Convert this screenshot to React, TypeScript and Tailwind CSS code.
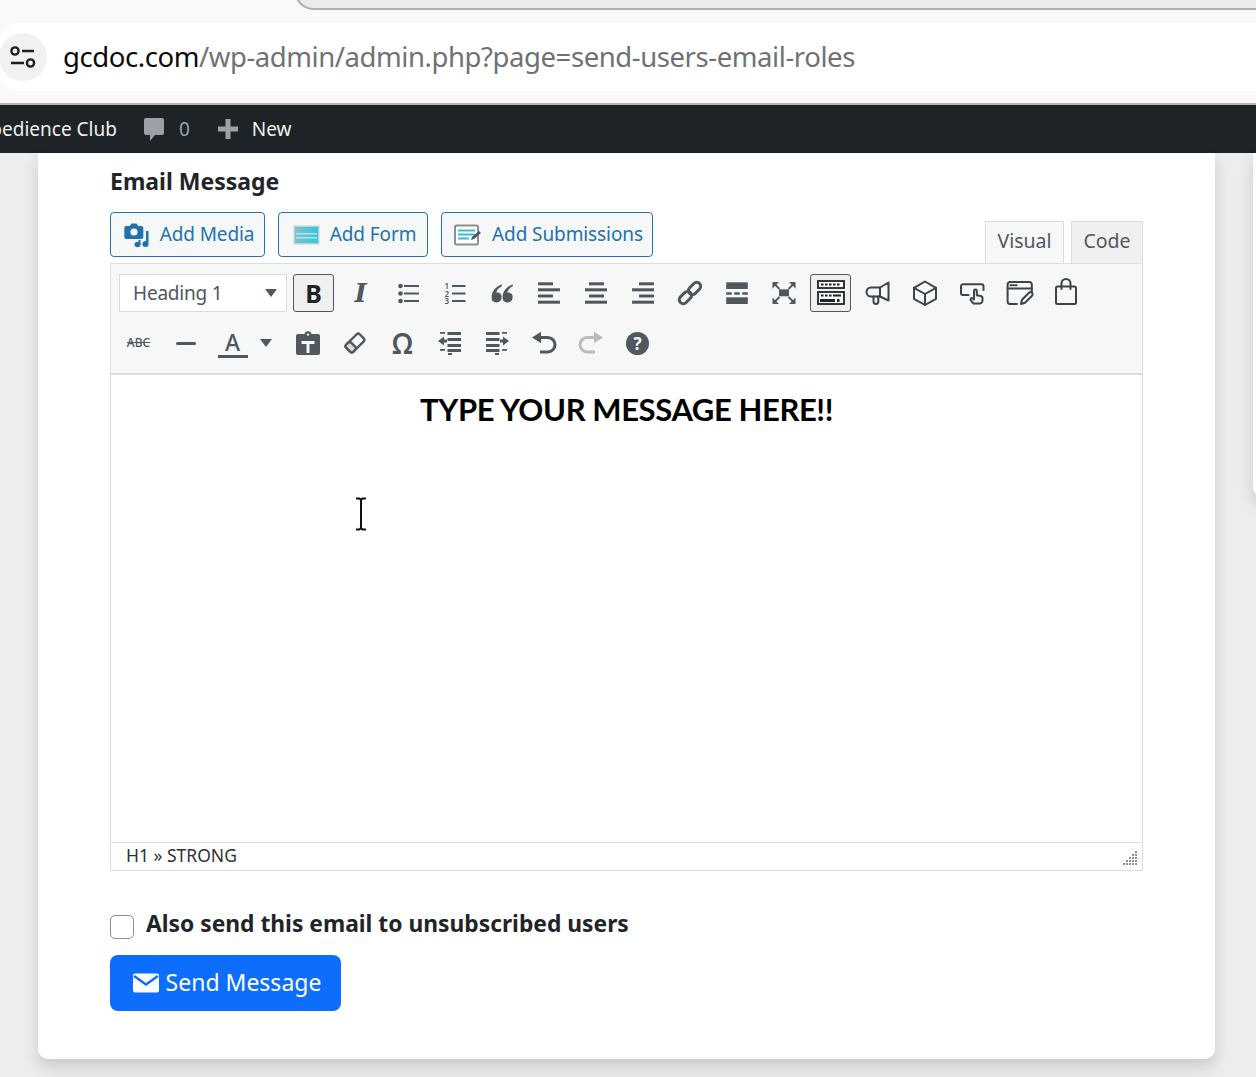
import type { ReactNode } from 'react'

const UI_FONT = "font-['Noto_Sans',sans-serif]"
const GREY = '#50575e'
const DARK = '#3c434a'

const Svg = ({ children, size = 24, view = '0 0 24 24' }: { children: ReactNode; size?: number; view?: string }) => (
  <svg width={size} height={size} viewBox={view} fill={GREY} className="overflow-visible">
    {children}
  </svg>
)

const Line = ({ children }: { children: ReactNode }) => (
  <Svg>
    <g fill="none" stroke={DARK} strokeWidth={2} strokeLinecap="round" strokeLinejoin="round">
      {children}
    </g>
  </Svg>
)

// toolbar button, every cell is 41px wide
const Tool = ({ children, active, nudge }: { children: ReactNode; active?: boolean; nudge?: boolean }) => (
  <div
    className={`flex h-[38px] w-[41px] shrink-0 items-center justify-center rounded-[3px] border ${
      active ? 'border-[#50575e] bg-[#f0f0f1]' : 'border-transparent'
    } ${nudge ? 'ml-px' : ''}`}
  >
    {children}
  </div>
)

const Caret = () => (
  <svg width={12} height={8} viewBox="0 0 12 8" fill={GREY}>
    <path d="M0 0h12L6 8z" />
  </svg>
)

const BulletList = () => (
  <Svg>
    <circle cx="4.5" cy="5" r="2.3" />
    <circle cx="4.5" cy="12.5" r="2.3" />
    <circle cx="4.5" cy="20" r="2.3" />
    <path d="M8 4h15v2H8zM8 11.500h15v2H8zM8 19h15v2H8z" />
  </Svg>
)

const NumberList = () => (
  <Svg>
    <g fontFamily="Noto Sans, sans-serif" fontSize="8" fontWeight="600">
      <text x="1.500" y="8">1</text>
      <text x="1.500" y="15.500">2</text>
      <text x="1.500" y="23">3</text>
    </g>
    <path d="M9 4h13.500v2H9zM9 11.500h13.500v2H9zM9 19h13.500v2H9z" />
  </Svg>
)

const QUOTE = 'M11.800 3.200C6 5.600 1.600 9.800 1.600 16.400a5 5 0 1 0 6.400-4.800c-.6-.2-1.200-.2-1.700-.2.6-2.800 2.800-4.700 5.500-6.100z'

const QuoteMark = () => (
  <Svg>
    <path d={QUOTE} />
    <path transform="translate(11 0)" d={QUOTE} />
  </Svg>
)

const Align = ({ side }: { side: 'left' | 'center' | 'right' }) => {
  const short = side === 'left' ? 1 : side === 'center' ? 5 : 8
  return (
    <Svg>
      <rect x={short} y="1.300" width="15" height="3" />
      <rect x="1" y="7.300" width="22" height="3" />
      <rect x={short} y="13.500" width="15" height="3" />
      <rect x="1" y="19.700" width="22" height="3" />
    </Svg>
  )
}

const ChainLink = () => (
  <Svg>
    <g fill="none" stroke={GREY} strokeWidth={3} transform="rotate(-45 12 12)">
      <rect x="-1.500" y="8" width="14" height="8" rx="4" />
      <rect x="11.500" y="8" width="14" height="8" rx="4" />
    </g>
  </Svg>
)

const ReadMore = () => (
  <Svg>
    <rect x="1.200" y="1.300" width="21.600" height="6.700" />
    <path d="M1.200 11.300h5.600v2.400H1.200zM9.200 11.300h5.600v2.400H9.200zM17.200 11.300h5.600v2.400h-5.600z" />
    <rect x="1.200" y="16.300" width="21.600" height="6.700" />
  </Svg>
)

const Fullscreen = () => (
  <Svg>
    <rect x="7" y="8.300" width="10" height="7" />
    <path d="M0.500 1h6.500L0.500 7.500zM23.500 1H17l6.500 6.500zM0.500 23v-6.500L7 23zM23.500 23v-6.500L17 23z" />
    <path d="M3 3.500l4.500 4.500M21 3.500L16.500 8M3 20.500L7.500 16M21 20.500L16.500 16" stroke={GREY} strokeWidth={1.800} />
  </Svg>
)

const KitchenSink = () => (
  <Svg size={28} view="0 0 28 28">
    <g fill="#f6f7f7" stroke="#1d2327" strokeWidth={1.800}>
      <rect x="1" y="2" width="26" height="7" />
      <rect x="1" y="13" width="26" height="12" />
    </g>
    <g fill="#1d2327">
      <path d="M4 4.500h2.500v2H4zM8 4.500h2.500v2H8zM12 4.500h2.500v2H12zM16 4.500h2.500v2H16zM20 4.500h2.500v2H20z" />
      <path d="M4 15.500h2.500v2H4zM8 15.500h2.500v2H8zM12 15.500h2.500v2H12zM16 15.500h8v2h-8z" />
      <path d="M3 20h15v3H3zM20 20h2.500v3H20z" />
    </g>
  </Svg>
)

const Bullhorn = () => (
  <Line>
    <path d="M22.500 1.500L14 6.500H5a4.500 4.500 0 0 0 0 9h9l8.500 4z" />
    <path d="M14 6.500v9M7.500 15.500v5a2.400 2.400 0 0 0 4.800 0v-5" />
  </Line>
)

const Cube = () => (
  <Line>
    <path d="M12 0.500L23 6.800v11L12 24 1 17.800v-11z" />
    <path d="M1 6.800L12 13 23 6.800M12 13v11" />
  </Line>
)

const HandButton = () => (
  <Line>
    <path d="M8.500 14H3a2 2 0 0 1-2-2V5.300a2 2 0 0 1 2-2h18.500a2 2 0 0 1 2 2V9" />
    <path d="M13.500 22.600l-2.800-3.400a1.400 1.400 0 0 1 2.100-1.800l1.200 1.200V10a1.400 1.400 0 0 1 2.800 0v4.200l3.900.8a2.200 2.200 0 0 1 1.800 2.200v2.200a3 3 0 0 1-3 3.200z" />
  </Line>
)

const EditorWindow = () => (
  <Line>
    <path d="M10 23H3a2.400 2.400 0 0 1-2.400-2.400V3.400A2.400 2.400 0 0 1 3 1h19.400a2.400 2.400 0 0 1 2.400 2.400V11" />
    <path d="M.6 7.500h24.200" />
    <path d="M3.400 4.200h1M6 4.200h1M8.600 4.200h1" />
    <path d="M14 23l1-4.200 7-7a2.100 2.100 0 0 1 3 3l-7 7z" />
  </Line>
)

const Bag = () => (
  <Line>
    <rect x="2" y="5.500" width="20" height="17.500" rx="1.500" />
    <path d="M7.500 8V2.500a4.500 4.500 0 0 1 9 0V8" />
  </Line>
)

const Paste = () => (
  <Svg>
    <path d="M2 3h6.500a3.600 3.600 0 0 1 7 0H22a2 2 0 0 1 2 2v17a2 2 0 0 1-2 2H2a2 2 0 0 1-2-2V5a2 2 0 0 1 2-2z" />
    <path d="M5.500 10h13v3h-5v9h-3v-9h-5z" fill="#f6f7f7" />
    <circle cx="12" cy="3.600" r="1.200" fill="#f6f7f7" />
  </Svg>
)

const Eraser = () => (
  <Svg>
    <g transform="rotate(-45 12 12)">
      <rect x="2.500" y="7" width="19" height="10" rx="2.500" fill="none" stroke={GREY} strokeWidth={2.400} />
      <rect x="2.500" y="7" width="7" height="10" rx="2" fill="#dcdcde" stroke={GREY} strokeWidth={2.400} />
    </g>
  </Svg>
)

const Outdent = () => (
  <Svg>
    <path d="M2 1h5v1.800H2zM9.500 1H23v3H9.500zM9.500 7H23v3H9.500zM9.500 13H23v3H9.500zM2 18h5v1.800H2zM9.500 18H23v3H9.500zM10 22h4v2h-4z" />
    <path d="M0 10l6-4.500V8.500h3v3H6v3z" />
  </Svg>
)

const Indent = () => (
  <Svg>
    <path d="M17 1h5v1.800h-5zM1 1h13.500v3H1zM1 7h13.500v3H1zM1 13h13.500v3H1zM17 18h5v1.800h-5zM1 18h13.500v3H1zM10 22h4v2h-4z" />
    <path d="M24 10l-6-4.500V8.500h-3v3h3v3z" />
  </Svg>
)

const Undo = ({ mirrored }: { mirrored?: boolean }) => {
  const colour = mirrored ? '#b9bcbf' : GREY
  return (
    <Svg>
      <g transform={mirrored ? 'matrix(-1 0 0 1 24 0)' : undefined}>
        <path d="M0 6.500L9 .8v11.400z" fill={colour} />
        <path d="M8 6.500h7.800a7.200 7.200 0 0 1 0 14.400H8" fill="none" stroke={colour} strokeWidth={3} />
      </g>
    </Svg>
  )
}

const Help = () => (
  <div className="flex size-[23px] items-center justify-center rounded-full bg-[#50575e] text-[17px] leading-none font-bold text-[#f6f7f7]">
    ?
  </div>
)

const MediaIcon = () => (
  <svg width={26} height={26} viewBox="0 0 26 26" fill="#2271b1">
    <path d="M2.500 4h3.200L7.500 1.500h5L14.300 4h3a2 2 0 0 1 2 2v9a2 2 0 0 1-2 2h-15a2 2 0 0 1-2-2V6a2 2 0 0 1 2-2z" />
    <circle cx="10" cy="10" r="3.600" fill="#f6f7f7" />
    <path d="M22 9h2.500v13a3 3 0 1 1-2.500-2.900z" />
    <ellipse cx="13.500" cy="22.500" rx="3" ry="2.700" />
    <path d="M14.500 18h2v4.500h-2z" />
  </svg>
)

const FormIcon = () => (
  <svg width={27} height={20} viewBox="0 0 27 20">
    <defs>
      <linearGradient id="formFill" x1="0" x2="1" y1="0" y2="0">
        <stop offset="0" stopColor="#7ec3cf" />
        <stop offset="1" stopColor="#2fc8dc" />
      </linearGradient>
    </defs>
    <rect x="0.500" y="0.500" width="26" height="19" rx="1" fill="#c4cfd1" />
    <rect x="2" y="2" width="23" height="16" fill="url(#formFill)" />
    <path d="M3 8h21v1.500H3zM3 12h21v1.500H3z" fill="#b5e6ee" />
  </svg>
)

const SubmissionsIcon = () => (
  <svg width={28} height={22} viewBox="0 0 28 22">
    <rect x="1" y="1.500" width="23" height="19" rx="1.500" fill="#fff" stroke="#8c8f94" strokeWidth={2} />
    <path d="M4 5.500h17v2H4zM4 9.500h17v2H4zM4 13.500h11v2H4z" fill="#38bcd4" />
    <path d="M17 16l1-3 7-6 2 2-7 6z" fill="#50575e" />
  </svg>
)

const MediaButton = ({ icon, label, width }: { icon: ReactNode; label: string; width: string }) => (
  <button className={`flex h-[45px] ${width} items-center justify-center gap-[10px] rounded-[4px] border border-[#2271b1] bg-[#f6f7f7] pl-[3px] text-[19px] tracking-[-0.1px] text-[#2271b1]`}>
    {icon}
    <span className="pb-px">{label}</span>
  </button>
)

const App = () => {
  return (
    <div className={`flex h-[1077px] w-[1256px] flex-col overflow-hidden bg-[#ededee] ${UI_FONT}`}>
      {/* Browser chrome */}
      <div className="shrink-0 bg-[#f9f9f9]">
        <div className="relative h-[23px]">
          <div className="absolute -top-[10px] left-[294px] h-[20px] w-[1000px] rounded-bl-[20px] border-b-2 border-l-2 border-[#b0b0b0] bg-[#ebebeb]" />
        </div>
        <div className="flex h-[68px] items-center overflow-hidden rounded-l-[18px] bg-white">
          <div className="-ml-px flex size-[48px] shrink-0 items-center justify-center rounded-full bg-[#f1f1f1]">
            <svg width={26} height={22} viewBox="0 0 26 22" fill="none" stroke="#1f1f1f" strokeWidth={2.400}>
              <circle cx="5" cy="5" r="3.600" />
              <path d="M12 5h12M1 17h13" />
              <circle cx="20.500" cy="17" r="3.600" />
            </svg>
          </div>
          <div className="ml-[16px] text-[27.500px] tracking-[-0.43px] whitespace-nowrap text-[#6f7275]">
            <span className="text-[#0b0b0b]">gcdoc.com</span>/wp-admin/admin.php?page=send-users-email-roles
          </div>
        </div>
        <div className="h-[12px]" />
        <div className="h-[2px] bg-[#b4b4b4]" />
      </div>

      {/* Admin bar */}
      <div className="flex h-[48px] shrink-0 items-center overflow-hidden bg-[#1d2327] text-[19px] text-[#f0f0f1]">
        <span className="-ml-[24.500px] whitespace-nowrap">Obedience Club</span>
        <svg className="ml-[26px]" width={22} height={24} viewBox="0 0 22 24" fill="#9ca1a7">
          <path d="M3 1h16a2 2 0 0 1 2 2v13a2 2 0 0 1-2 2h-7l-5 6v-6H3a2 2 0 0 1-2-2V3a2 2 0 0 1 2-2z" />
        </svg>
        <span className="ml-[14px] text-[#9ca1a7]">0</span>
        <svg className="ml-[27px]" width={22} height={22} viewBox="0 0 22 22" fill="#9ca1a7">
          <path d="M8.500 1h5v7.500h7.500v5h-7.500V21h-5v-7.500H1v-5h7.500z" />
        </svg>
        <span className="ml-[13px]">New</span>
      </div>

      {/* Page */}
      <div className="flex min-h-0 flex-1 items-start gap-[38px] pl-[38px]">
        <div className="h-[906px] w-[1177px] shrink-0 rounded-b-[10px] bg-white pl-[72px] shadow-[0_8px_16px_rgba(0,0,0,0.15)]">
          <h2 className="pt-[12px] text-[23px] leading-[32px] font-bold text-[#212529]">Email Message</h2>

          <div className="mt-[15px] flex h-[51px] w-[1033px] items-start">
            <div className="flex gap-[13px]">
              <MediaButton icon={<MediaIcon />} label="Add Media" width="w-[155px]" />
              <MediaButton icon={<FormIcon />} label="Add Form" width="w-[150px]" />
              <MediaButton icon={<SubmissionsIcon />} label="Add Submissions" width="w-[212px]" />
            </div>
            <div className="mt-[9px] ml-auto flex gap-[7px] text-[19.500px] text-[#50575e]">
              <div className="flex h-[42px] w-[79px] items-center justify-center border border-b-0 border-[#dcdcde] bg-[#f6f7f7] pb-[4px]">Visual</div>
              <div className="flex h-[42px] w-[72px] items-center justify-center border border-b-0 border-[#dcdcde] bg-[#f0f0f1] pb-[4px]">Code</div>
            </div>
          </div>

          {/* Editor */}
          <div className="w-[1033px] border border-[#dcdcde]">
            <div className="flex h-[111px] flex-col gap-[12px] border-b-2 border-[#dcdcde] bg-[#f6f7f7] pt-[10px] pl-[8px]">
              <div className="flex gap-[6px]">
                <div className="flex h-[38px] w-[168px] items-center justify-between border border-[#dcdcde] bg-white pr-[9px] pl-[13px] text-[19px] tracking-[-0.2px] text-[#50575e]">
                  Heading 1
                  <Caret />
                </div>
                <Tool active>
                  <span className="text-[25px] leading-none font-bold text-[#1d2327]">B</span>
                </Tool>
                <Tool>
                  <span className="font-['DejaVu_Serif',serif] text-[26px] leading-none font-bold text-[#50575e] italic">I</span>
                </Tool>
                <Tool><BulletList /></Tool>
                <Tool><NumberList /></Tool>
                <Tool><QuoteMark /></Tool>
                <Tool><Align side="left" /></Tool>
                <Tool><Align side="center" /></Tool>
                <Tool><Align side="right" /></Tool>
                <Tool><ChainLink /></Tool>
                <Tool><ReadMore /></Tool>
                <Tool><Fullscreen /></Tool>
                <Tool active><KitchenSink /></Tool>
                <Tool><Bullhorn /></Tool>
                <Tool><Cube /></Tool>
                <Tool><HandButton /></Tool>
                <Tool><EditorWindow /></Tool>
                <Tool><Bag /></Tool>
              </div>
              <div className="-ml-px flex gap-[6px]">
                <Tool>
                  <span className="text-[12px] leading-none font-medium text-[#50575e] line-through">ABC</span>
                </Tool>
                <Tool>
                  <div className="h-[3px] w-[20px] rounded-full bg-[#50575e]" />
                </Tool>
                <div className="flex h-[38px] w-[69px] shrink-0 items-center">
                  <div className="flex w-[41px] flex-col items-center">
                    <span className="text-[23px] leading-[26px] font-medium text-[#50575e]">A</span>
                    <div className="h-[3px] w-[30px] bg-[#50575e]" />
                  </div>
                  <div className="ml-[7px]"><Caret /></div>
                </div>
                <Tool><Paste /></Tool>
                <Tool><Eraser /></Tool>
                <Tool nudge>
                  <span className="text-[28px] leading-none font-semibold text-[#50575e]">Ω</span>
                </Tool>
                <Tool><Outdent /></Tool>
                <Tool><Indent /></Tool>
                <Tool><Undo /></Tool>
                <Tool><Undo mirrored /></Tool>
                <Tool><Help /></Tool>
              </div>
            </div>

            <div className="relative h-[467px] bg-white pt-[15px]">
              <h1 className="text-center font-['Lato',sans-serif] text-[31px] leading-[38px] font-bold tracking-[-0.4px] text-black">
                TYPE YOUR MESSAGE HERE!!
              </h1>
              {/* mouse cursor */}
              <svg className="absolute top-[122px] left-[243px]" width={14} height={34} viewBox="0 0 14 34" fill="none" stroke="#111" strokeWidth={2}>
                <path d="M2 1.500h3.500l1.500 1.500 1.500-1.500H12M7 3v28M2 32.500h3.500L7 31l1.500 1.500H12" />
              </svg>
            </div>

            <div className="flex h-[28px] items-center justify-between border-t border-[#dcdcde] pr-[4px] pl-[15px] text-[17.500px] text-[#2c3338]">
              <span className="pb-[2px]">H1 » STRONG</span>
              <svg className="mt-[4px]" width={16} height={16} viewBox="0 0 16 16" fill="#8c8f94">
                <path d="M13 0h2v2h-2zM13 3h2v2h-2zM10 3h2v2h-2zM13 6h2v2h-2zM10 6h2v2h-2zM7 6h2v2H7zM13 9h2v2h-2zM10 9h2v2h-2zM7 9h2v2H7zM4 9h2v2H4zM13 12h2v2h-2zM10 12h2v2h-2zM7 12h2v2H7zM4 12h2v2H4zM1 12h2v2H1z" />
              </svg>
            </div>
          </div>

          {/* Options */}
          <div className="mt-[38px] flex items-start gap-[12px]">
            <div className="mt-[6px] size-[24px] rounded-[5px] border border-[#8a8f94] bg-white" />
            <span className="text-[22.800px] leading-[30px] font-bold text-[#212529]">Also send this email to unsubscribed users</span>
          </div>
          <button className="mt-[16px] flex h-[56px] w-[231px] items-center justify-center gap-[7px] rounded-[8px] bg-[#0d6efd] pl-[3px] text-[23px] text-white">
            <svg width={26} height={20} viewBox="0 0 26 20">
              <rect width="26" height="19" y="0.500" rx="2" fill="#fff" />
              <path d="M1 3l12 8.500L25 3" fill="none" stroke="#0d6efd" strokeWidth={2.400} />
            </svg>
            <span className="pb-[2px]">Send Message</span>
          </button>
        </div>

        {/* Next card, only its edge is on screen */}
        <div className="h-[344px] w-[60px] shrink-0 rounded-bl-[10px] bg-white shadow-[0_8px_16px_rgba(0,0,0,0.15)]" />
      </div>
    </div>
  )
}

export default App
